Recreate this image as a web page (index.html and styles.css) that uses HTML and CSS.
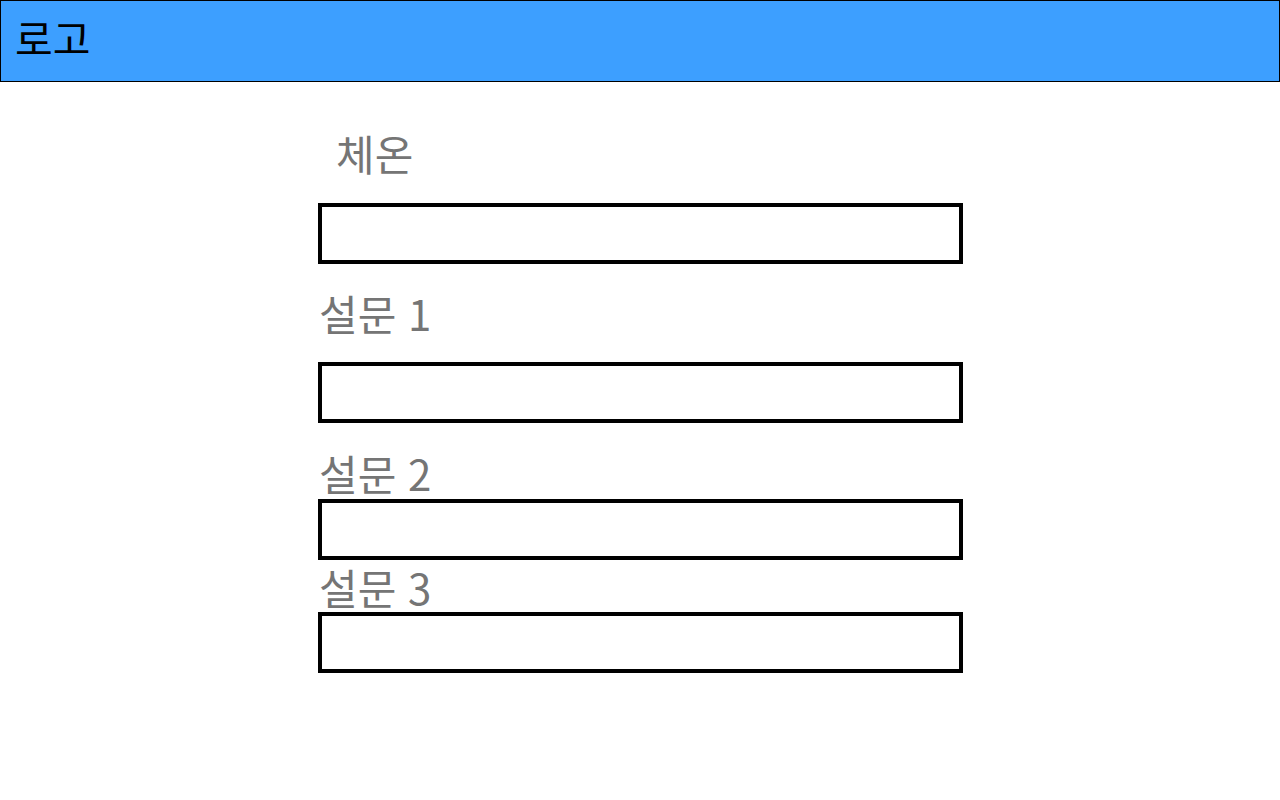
FILE: index.html
```html
<!DOCTYPE html>
<html lang="ko">
<head>
<meta charset="utf-8">
<title>설문</title>
<link rel="stylesheet" href="styles.css">
</head>
<body>
<header class="topbar">
  <div class="logo">로고</div>
</header>
<main class="page">
  <form class="survey">
    <label class="field-label field-label--indent label-1">체온</label>
    <input class="field-input" type="text">
    <label class="field-label label-2">설문 1</label>
    <input class="field-input" type="text">
    <label class="field-label label-3">설문 2</label>
    <input class="field-input input-3" type="text">
    <label class="field-label label-4">설문 3</label>
    <input class="field-input input-4" type="text">
  </form>
</main>
</body>
</html>
```

FILE: styles.css
```css
* { box-sizing: border-box; }

html, body {
  margin: 0;
  padding: 0;
  background: #ffffff;
  font-family: "Noto Sans CJK KR", "Noto Sans", sans-serif;
}

.topbar {
  height: 82px;
  background: #3d9fff;
  border: 1px solid #000000;
  padding: 0 14px;
  display: flex;
  align-items: flex-start;
}

.logo {
  font-size: 41px;
  line-height: 40px;
  margin-top: 16px;
  color: #000000;
}

.page {
  display: flex;
  justify-content: center;
}

.survey {
  width: 645px;
  margin-left: 1px;
  display: flex;
  flex-direction: column;
}

.field-label {
  display: block;
  font-size: 42px;
  line-height: 40px;
  color: #757575;
  margin-left: 1px;
}

.field-label--indent { margin-left: 18px; }

.label-1 { margin-top: 51px; margin-bottom: 30px; }
.label-2 { margin-top: 29px; margin-bottom: 29px; }
.label-3 { margin-top: 30px; margin-bottom: 6px; }
.label-4 { margin-top: 7px; margin-bottom: 5px; }

.field-input {
  display: block;
  width: 645px;
  height: 61px;
  border: 4px solid #000000;
  background: #ffffff;
  margin: 0;
  padding: 0 8px;
  font-size: 20px;
  outline: none;
  border-radius: 0;
}
```
